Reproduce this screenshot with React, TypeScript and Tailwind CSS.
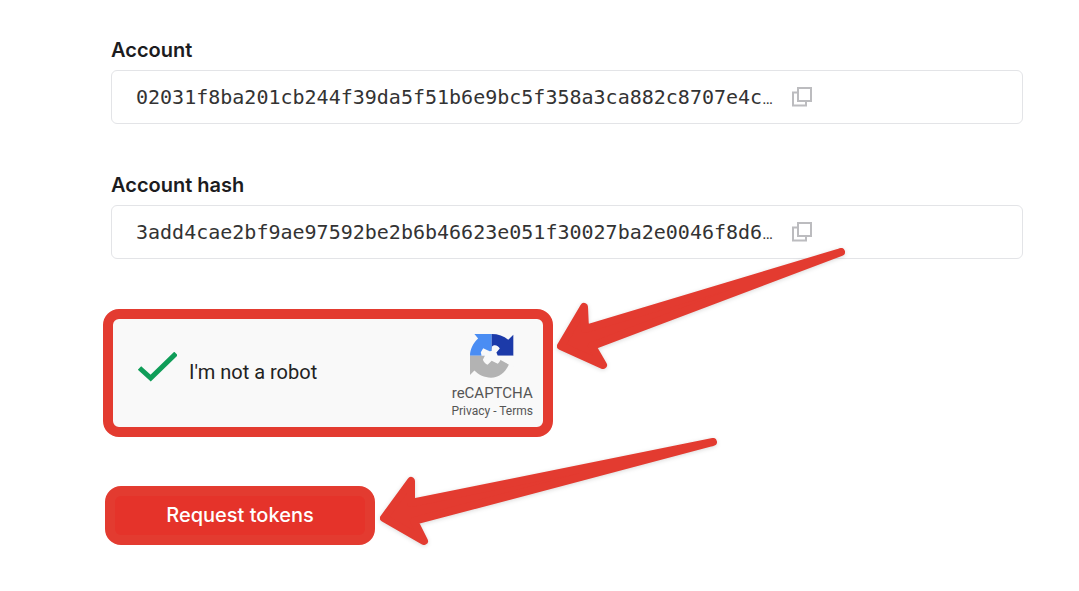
import { useState } from 'react';

const FIELDS = [
  { id: 'account',      label: 'Account',      value: '02031f8ba201cb244f39da5f51b6e9bc5f358a3ca882c8707e4c' },
  { id: 'account-hash', label: 'Account hash', value: '3add4cae2bf9ae97592be2b6b46623e051f30027ba2e0046f8d6' },
];

function CopyIcon() {
  return (
    <svg className="w-5 h-5" viewBox="0 0 20 20" fill="none" stroke="#bcbcbf" strokeWidth={2}>
      <path d="M6 1h13v13h-13z" />
      <path d="M6 5.5h-5v13h13v-4.5" />
    </svg>
  );
}

function RecaptchaLogo() {
  return (
    <svg className="w-11 h-11" viewBox="0 0 130 130" aria-hidden="true">
      <path fill="#4a8df3" d="M13 0H64V64H0C0 45 9 27 24 13Z" />
      <path fill="#1c3aa9" d="M64 0C83 0 100 6 113 17L128 2V64H64Z" />
      <path fill="#b3b3b3" d="M0 64H64L89 76L115 90C103 115 85 129 62 129C42 129 26 121 13 108L0 121Z" />
      {/* white splash in the middle of the ring */}
      <path fill="#f9f9f9" d="M32 54L39 42C45 45 52 47 58 51L64 50L65 37C72 29 84 34 88 43L78 55L82 64H128V96L115 90L91 74C89 80 86 85 82 88L64 79L52 91C46 88 40 82 38 76L44 64H34Z" />
    </svg>
  );
}

export default function App() {
  const [checked, setChecked] = useState(true);

  const copy = (value: string) => {
    navigator.clipboard?.writeText(value);
  };

  return (
    <div className="min-h-screen overflow-hidden bg-white pl-[111px] pr-14 py-9 font-['Inter',sans-serif]">
      <div className="flex flex-col gap-[47px]">
        {FIELDS.map(field => (
          <div key={field.id}>
            <label htmlFor={field.id} className="block mb-1.5 text-[20px] leading-7 font-semibold text-[#1c1c1e]">{field.label}</label>
            <div className="flex items-center h-[54px] px-6 border border-[#e3e4e7] rounded-md">
              <output id={field.id} className="w-[648px] whitespace-nowrap font-['DejaVu_Sans_Mono',monospace] text-[20px] leading-7 text-[#333]">
                {field.value}<span className="font-['Roboto',sans-serif] text-base">…</span>
              </output>
              <button type="button" aria-label={`Copy ${field.label}`} onClick={() => copy(field.value)} className="ml-2">
                <CopyIcon />
              </button>
            </div>
          </div>
        ))}
      </div>

      <form onSubmit={e => e.preventDefault()} className="-ml-2 mt-[50px] flex flex-col items-start gap-[49px]">
        <div className="relative">
          <div className="flex items-center justify-between w-[450px] h-32 pl-6 pr-2.5 pb-0.5 border-10 border-[#e33b30] rounded-2xl bg-[#f9f9f9] font-['Roboto',sans-serif]">
            <label className="flex items-center gap-3 text-[20px] leading-7 text-[#222]">
              <input type="checkbox" checked={checked} onChange={e => setChecked(e.target.checked)} className="sr-only" />
              <svg className="w-10 h-10" viewBox="0 0 40 40" fill="none" stroke="#0f9d58" strokeWidth={5}>
                {checked && <path d="M2.5 16L13.7 26L39 1.5" />}
              </svg>
              I'm not a robot
            </label>
            <div className="flex flex-col items-center pt-2 text-[#555]">
              <RecaptchaLogo />
              <span className="mt-[5px] text-[15px] leading-5">reCAPTCHA</span>
              <span className="text-[12px] leading-4">
                <a href="#privacy">Privacy</a> - <a href="#terms">Terms</a>
              </span>
            </div>
          </div>
          <svg className="absolute left-full -top-16 w-[300px] h-[130px] overflow-visible pointer-events-none drop-shadow-sm" viewBox="0 0 300 130" aria-hidden="true">
            <path d="M8 101L31 62L32 84L288 7L39 101L50 120Z" fill="#e33b30" stroke="#e33b30" strokeWidth={8} strokeLinejoin="round" />
          </svg>
        </div>

        <div className="relative ml-0.5">
          <button type="submit" className="w-[270px] h-[59px] pb-0.5 border-10 border-[#e33b30] rounded-2xl bg-[#e5332a] text-[20px] leading-7 font-medium text-white">
            Request tokens
          </button>
          <svg className="absolute left-full -top-13 w-[350px] h-[120px] overflow-visible pointer-events-none drop-shadow-sm" viewBox="0 0 350 120" aria-hidden="true">
            <path d="M9 84L36 47L36 69L338 8L39 87L49 107Z" fill="#e33b30" stroke="#e33b30" strokeWidth={8} strokeLinejoin="round" />
          </svg>
        </div>
      </form>
    </div>
  );
}
